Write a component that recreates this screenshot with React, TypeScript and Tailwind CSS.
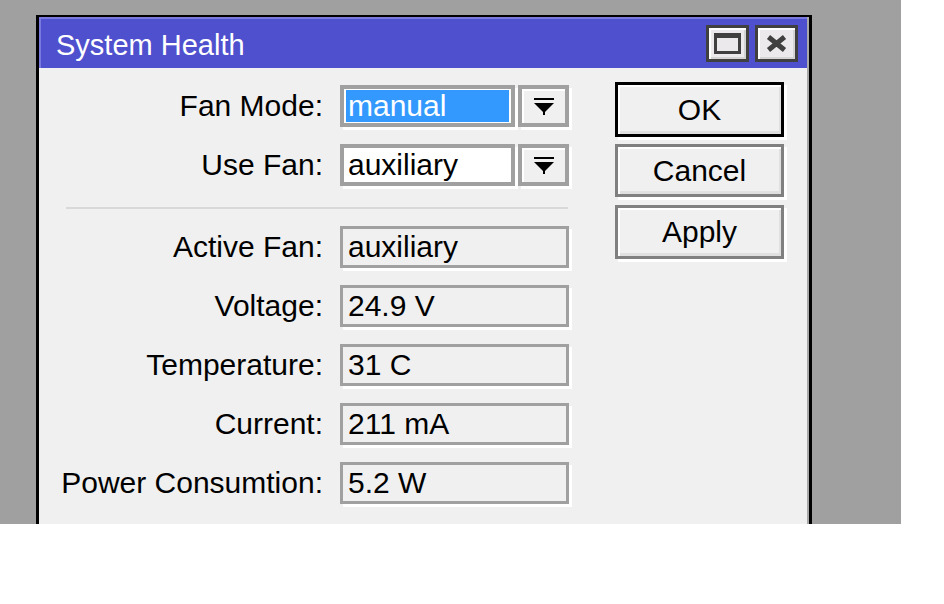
import React from "react";

const font = { fontFamily: '"Liberation Sans", Arial, sans-serif' };

function DropArrow() {
  return (
    <svg width="20" height="17" viewBox="0 0 20 17">
      <rect x="0" y="0" width="20" height="2" fill="#000" />
      <polygon points="0,5 20,5 10,15" fill="#000" />
      <rect x="9" y="13" width="2" height="4" fill="#000" />
    </svg>
  );
}

function Label({ children }: { children: React.ReactNode }) {
  return (
    <div className="w-[284px] text-right text-[30px] leading-none text-black whitespace-nowrap">
      {children}
    </div>
  );
}

function ReadOnly({ label, value }: { label: string; value: string }) {
  return (
    <div className="flex items-center h-[42px] mt-[17px]">
      <Label>{label}</Label>
      <div className="ml-[17px] w-[229px] h-[42px] border-[3px] border-[#a0a0a0] bg-[#f0f0f0] shadow-[3px_3px_0_#fff] flex items-center pl-[5px] text-[30px] leading-none text-black whitespace-nowrap">
        {value}
      </div>
    </div>
  );
}

function Btn({ children, primary, h, mt }: { children: React.ReactNode; primary?: boolean; h: string; mt: string }) {
  return (
    <div
      className={
        "w-[169px] border-[3px] bg-[#f0f0f0] shadow-[inset_2px_2px_0_#fff,inset_-2px_-3px_0_#e0e0e0,3px_3px_0_#fff] flex items-center justify-center text-[30px] leading-none text-black " +
        (primary ? "border-black " : "border-[#808080] ") +
        h +
        " " +
        mt
      }
    >
      {children}
    </div>
  );
}

export default function App() {
  return (
    <div className="w-[944px] h-[604px] bg-white overflow-hidden" style={font}>
      <div className="w-[901px] h-[524px] bg-[#a0a0a0] pt-[15px] pl-[36px] overflow-hidden">
        <div className="w-[776px] h-[509px] border-black border-t-2 border-x-[3px] flex flex-col">
          <div className="flex flex-col h-full border-r-2 border-[#a8a8a8]">
            {/* Title bar */}
            <div className="h-[51px] shrink-0 bg-[#4f50ce] border-t-2 border-l-2 border-[#7a7ade] flex items-center justify-between pl-[15px] pr-[9px]">
              <div className="text-white text-[29px] leading-none pt-[4px] whitespace-nowrap">System Health</div>
              <div className="flex gap-[6px]">
                <div className="w-[43px] h-[37px] border-[3px] border-[#404040] bg-[#ece9ec] shadow-[inset_2px_2px_0_#fff,inset_-2px_-2px_0_#d4d4d4] flex items-center justify-center">
                  <div className="w-[27px] h-[21px] border-[3px] border-t-[5px] border-[#404040] bg-[#ece9ec]" />
                </div>
                <div className="w-[43px] h-[37px] border-[3px] border-[#404040] bg-[#ece9ec] shadow-[inset_2px_2px_0_#fff,inset_-2px_-2px_0_#d4d4d4] flex items-center justify-center">
                  <svg width="21" height="17" viewBox="0 0 21 17">
                    <path d="M2.5 2 L18.5 15 M18.5 2 L2.5 15" stroke="#404040" strokeWidth="5" />
                  </svg>
                </div>
              </div>
            </div>
            {/* Content */}
            <div className="flex-1 bg-[#f0f0f0] flex">
              <div className="w-[530px] pt-[17px]">
                <div className="flex items-center h-[42px]">
                  <Label>Fan Mode:</Label>
                  <div className="ml-[17px] w-[175px] h-[42px] border-4 border-[#a0a0a0] bg-white p-[2px] py-[1px] shadow-[3px_3px_0_#fff]">
                    <div className="h-full bg-[#3399ff] text-white flex items-center pl-[2px] text-[30px] leading-none">manual</div>
                  </div>
                  <div className="ml-[3px] w-[51px] h-[42px] border-4 border-[#a0a0a0] bg-[#f0f0f0] shadow-[inset_2px_2px_0_#fff,3px_3px_0_#fff] flex items-center justify-center">
                    <DropArrow />
                  </div>
                </div>
                <div className="flex items-center h-[42px] mt-[17px]">
                  <Label>Use Fan:</Label>
                  <div className="ml-[17px] w-[175px] h-[42px] border-4 border-[#a0a0a0] bg-white shadow-[3px_3px_0_#fff] flex items-center pl-[4px] text-[30px] leading-none text-black">
                    auxiliary
                  </div>
                  <div className="ml-[3px] w-[51px] h-[42px] border-4 border-[#a0a0a0] bg-[#f0f0f0] shadow-[inset_2px_2px_0_#fff,3px_3px_0_#fff] flex items-center justify-center">
                    <DropArrow />
                  </div>
                </div>
                <div className="ml-[27px] w-[502px] h-[2px] bg-[#d9d9d9] mt-[21px]" />
                <ReadOnly label="Active Fan:" value="auxiliary" />
                <ReadOnly label="Voltage:" value="24.9 V" />
                <ReadOnly label="Temperature:" value="31 C" />
                <ReadOnly label="Current:" value="211 mA" />
                <ReadOnly label="Power Consumtion:" value="5.2 W" />
              </div>
              <div className="ml-[46px] pt-[14px] flex flex-col">
                <Btn primary h="h-[55px]" mt="mt-0">OK</Btn>
                <Btn h="h-[53px]" mt="mt-[7px]">Cancel</Btn>
                <Btn h="h-[54px]" mt="mt-[8px]">Apply</Btn>
              </div>
            </div>
          </div>
        </div>
      </div>
    </div>
  );
}
